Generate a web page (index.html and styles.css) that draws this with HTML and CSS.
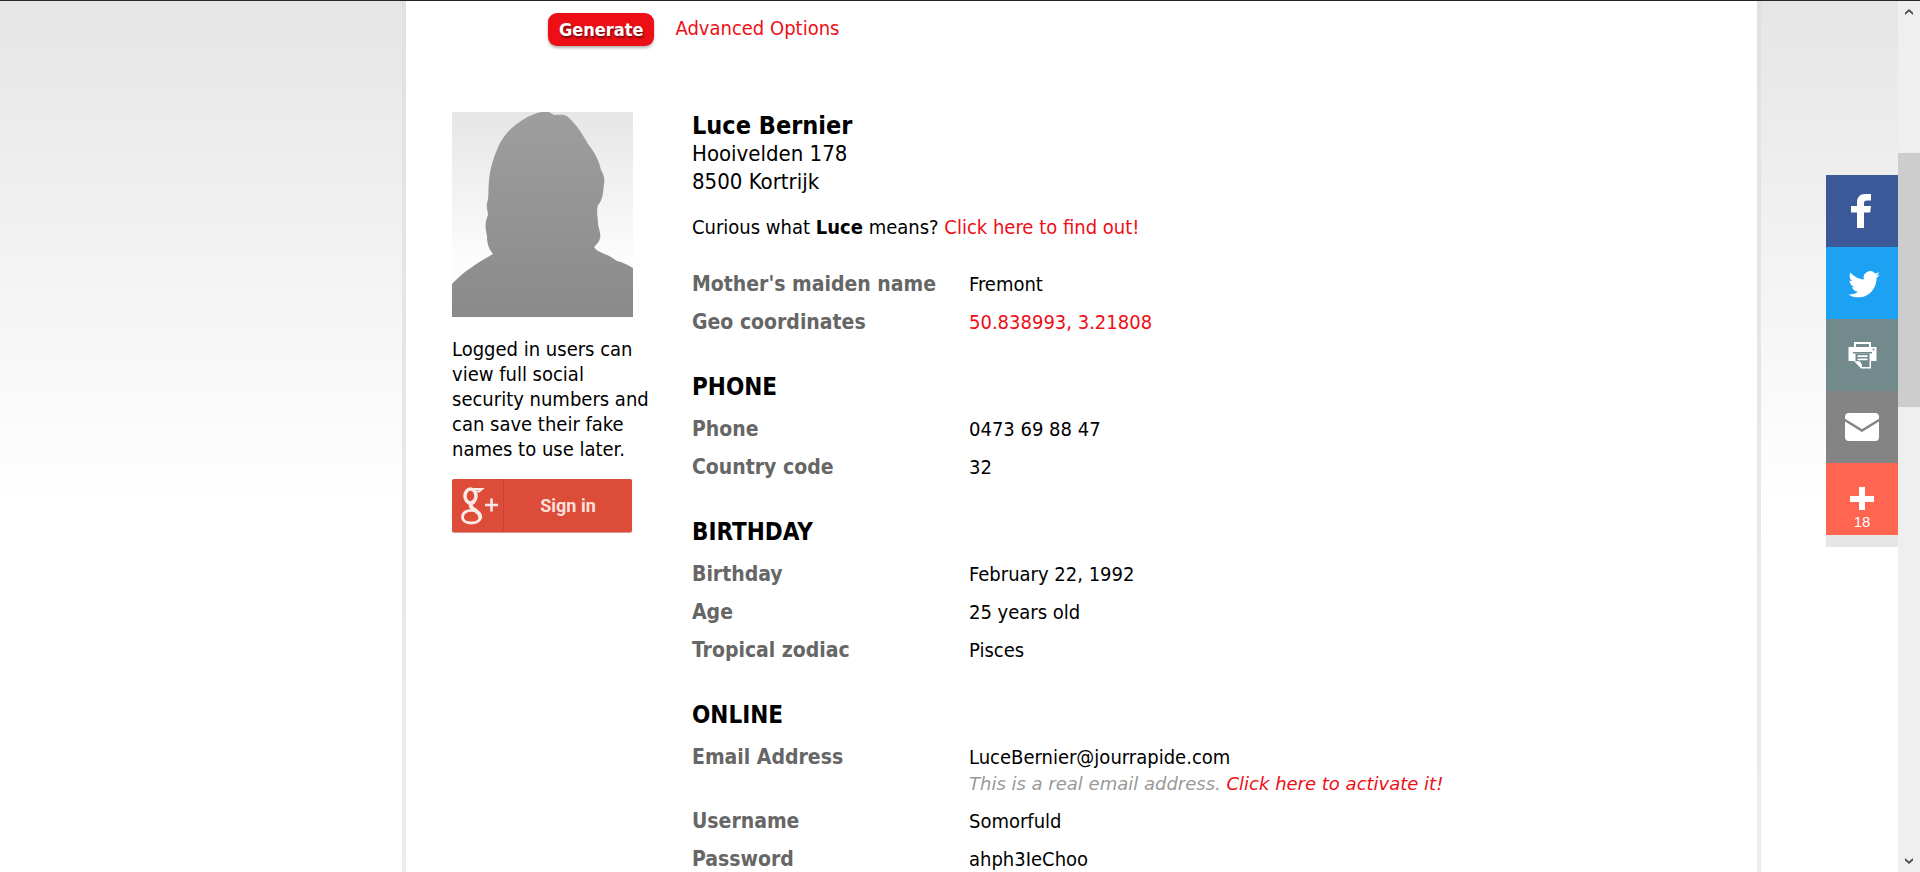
FILE: index.html
```html
<!DOCTYPE html>
<html lang="en">
<head>
<meta charset="utf-8">
<title>Luce Bernier</title>
<link rel="stylesheet" href="styles.css">
</head>
<body>
<div class="window">
  <div class="viewport">
    <main class="page">
      <div class="toolbar">
        <button class="generate" type="button">Generate</button>
        <a class="advanced" href="#">Advanced Options</a>
      </div>
      <div class="content">
        <aside class="side">
          <svg class="avatar" viewBox="0 0 181 205" role="img" aria-label="Silhouette of a woman">
            <defs>
              <linearGradient id="sky" x1="0" y1="0" x2="0" y2="1"><stop offset="0" stop-color="#e6e6e6"/><stop offset=".75" stop-color="#fdfdfd"/></linearGradient>
              <linearGradient id="body" x1="0" y1="0" x2="0" y2="1"><stop offset="0" stop-color="#9e9e9e"/><stop offset="1" stop-color="#8a8a8a"/></linearGradient>
            </defs>
            <rect width="181" height="205" fill="url(#sky)"/>
            <path fill="url(#body)" d="M0 172C11 160 25 151 41 142C36 136 35 130 35 124C33 115 33 110 36 103C36 99 34 96 35 91C37 87 36 77 37 69C38 56 42 44 47 33C53 21 61 14 72 7C80 2 89 -1 97 0L102 3C108 3 112 2 116 5C124 12 130 21 136 32C143 41 147 48 149 58C152 63 153 67 152 72C151 80 151 88 146 93C144 99 146 105 146 112C147 118 150 123 147 129C146 131 144 133 142 135C145 140 152 141 159 145L165 149C170 150 176 153 181 156V205H0Z"/>
          </svg>
          <p class="notice">Logged in users can view full social security numbers and can save their fake names to use later.</p>
          <button class="signin" type="button">
            <svg class="signin-logo" viewBox="0 0 51 53" fill="none" stroke="#fbe9e6" aria-hidden="true">
              <ellipse cx="18.500" cy="17" rx="5.500" ry="7" stroke-width="3.500"/>
              <path d="M18 10h12l-3 2.500h-5" stroke-width="2"/>
              <path d="M22 22.500c-5 3-4 5 0 8c4 3 7 5 6 9" stroke-width="4"/>
              <path d="M22 31.500c-7-1-11.500 2-11.500 6.500c0 4 4 6 9 6c6 0 9.500-3 8.500-7" stroke-width="2.800"/>
              <path d="M33 26h13M39.500 19.500v13" stroke-width="2.600"/>
            </svg>
            <span class="signin-label">Sign in</span>
          </button>
        </aside>
        <div class="details">
          <div class="address">
            <h1 class="name">Luce Bernier</h1>
            <div>Hooivelden 178</div>
            <div>8500 Kortrijk</div>
          </div>
          <p class="curious">Curious what <b>Luce</b> means? <a href="#">Click here to find out!</a></p>
          <dl class="facts">
            <dt>Mother's maiden name</dt><dd>Fremont</dd>
            <dt>Geo coordinates</dt><dd><a href="#">50.838993, 3.21808</a></dd>
          </dl>
          <h2 class="section">PHONE</h2>
          <dl class="facts">
            <dt>Phone</dt><dd>0473 69 88 47</dd>
            <dt>Country code</dt><dd>32</dd>
          </dl>
          <h2 class="section">BIRTHDAY</h2>
          <dl class="facts">
            <dt>Birthday</dt><dd>February 22, 1992</dd>
            <dt>Age</dt><dd>25 years old</dd>
            <dt>Tropical zodiac</dt><dd>Pisces</dd>
          </dl>
          <h2 class="section">ONLINE</h2>
          <dl class="facts">
            <dt>Email Address</dt><dd>LuceBernier@jourrapide.com<div class="hint">This is a real email address. <a href="#">Click here to activate it!</a></div></dd>
            <dt>Username</dt><dd>Somorfuld</dd>
            <dt>Password</dt><dd>ahph3IeChoo</dd>
          </dl>
        </div>
      </div>
    </main>
    <nav class="share" aria-label="Share">
      <a class="share-item facebook" href="#" aria-label="Facebook"><svg viewBox="0 0 72 72" fill="#fff"><path d="M31 53V37.500h-6V31h6v-3.500C31 22 34 19 39 19h6v6.500h-4c-2 0-3 .8-3 2.500v3h7l-.8 6.500H38V53z"/></svg></a>
      <a class="share-item twitter" href="#" aria-label="Twitter"><svg viewBox="0 0 72 72" fill="#fff"><path d="M54 27.500c-1.200.5-2.400.9-3.700 1c1.300-.8 2.300-2 2.800-3.500c-1.200.7-2.600 1.200-4 1.500a6.500 6.500 0 0 0-11.200 6c-5.400-.3-10.200-2.900-13.400-6.900c-1.700 3-.9 6.800 2 8.700c-1 0-2-.3-2.900-.8c0 3.200 2.200 5.900 5.200 6.500c-1 .3-2 .3-2.900.1c.8 2.600 3.200 4.500 6 4.600c-2.700 2.100-6.200 3.100-9.600 2.700C25.200 49.300 28.700 50.300 32 50.300c12 0 18.800-10.200 18.500-19.400c1.300-.9 2.500-2.100 3.500-3.400z"/></svg></a>
      <a class="share-item print" href="#" aria-label="Print"><svg viewBox="0 0 72 72"><path fill="#fff" d="M28 23h17v5h-2v-3H30v3h-2zM22.500 28h28v14h-5.500v7.500H35L28 42h-5.500z"/><path fill="#738a8d" d="M27 33h19v1.500H27z"/><path fill="#738a8d" d="M29.500 34.500h14V48H36v-2l-2-3.500h-4.500z"/><path fill="#fff" d="M31.500 36.200h10V38h-10zM31.500 39.500h10v1.800h-10zM29.500 42.500h4l2.500 4v2h-1z"/><circle cx="47.500" cy="30.500" r="1" fill="#738a8d"/></svg></a>
      <a class="share-item email" href="#" aria-label="Email"><svg viewBox="0 0 72 72"><rect x="19" y="22" width="34" height="28" rx="4" fill="#fff"/><path d="M18 28.500l18 11l18-11" fill="none" stroke="#848484" stroke-width="2.500"/></svg></a>
      <a class="share-item more" href="#" aria-label="More, 18 shares"><svg viewBox="0 0 72 72" fill="#fff"><path d="M33 24h6v9h9v6h-9v8h-6v-8h-9v-6h9z"/></svg><span class="count">18</span></a>
    </nav>
  </div>
  <div class="scrollbar" aria-hidden="true">
    <svg class="arrow" viewBox="0 0 8 6"><path d="M0 6V3.500L4 0l4 3.500V6L4 2.500z"/></svg>
    <div class="track"><div class="thumb"></div></div>
    <svg class="arrow" viewBox="0 0 8 6"><path d="M0 0v2.500L4 6l4-3.500V0L4 3.500z"/></svg>
  </div>
</div>
</body>
</html>
```
FILE: styles.css
```css
* { box-sizing: border-box; }

body {
  margin: 0;
  color: #000;
  background: #fff;
  font: 20px/28px "DejaVu Sans Condensed", "DejaVu Sans", sans-serif;
}

a { color: #ee0e16; text-decoration: none; }
h1, h2, p, dl, dd { margin: 0; }

.window {
  display: flex;
  height: 100vh;
  overflow: hidden;
  border-top: 1px solid #272327;
}

.viewport {
  position: relative;
  flex: 1;
  display: grid;
  grid-template-columns: 402fr minmax(0, 1359fr) 137fr;
  background: linear-gradient(#e6e6e6, #e8e8e8 50px, #fff 500px);
}

.page {
  grid-column: 2;
  padding: 12px 46px 0;
  background: linear-gradient(#fff, #fff) padding-box, linear-gradient(#e1e1e1, #ededed) border-box;
  border: solid transparent;
  border-width: 0 4px;
}

.toolbar {
  display: flex;
  align-items: flex-start;
  gap: 21px;
  padding-left: 96px;
  line-height: 30px;
}

.generate {
  padding: 0 11px;
  border: 0;
  border-radius: 9px;
  background: #ee0e16;
  color: #fff;
  box-shadow: 0 2px 3px rgba(0, 0, 0, .3);
  text-shadow: 1px 2px 2px rgba(0, 0, 0, .5);
  font: bold 18px/33px "DejaVu Sans Condensed", "DejaVu Sans", sans-serif;
}

.content {
  display: grid;
  grid-template-columns: 202px minmax(0, 1fr);
  gap: 38px;
  margin-top: 66px;
}

.avatar { display: block; width: 181px; }
.notice { margin: 20px 0 17px; line-height: 25px; }

.signin {
  display: flex;
  align-items: center;
  width: 180px;
  height: 53px;
  padding: 0;
  border: 0;
  border-radius: 2px;
  background: #dd4b39;
  box-shadow: 0 1px 1px rgba(160, 40, 20, .5);
  color: #fbe0dc;
  font: bold 18px/24px Roboto, sans-serif;
}

.signin-logo { width: 52px; height: 53px; border-right: 1px solid #c94433; }
.signin-label { flex: 1; text-align: center; }

.address { font-size: 22px; }
.name { font-size: 25px; line-height: 28px; }
.curious { margin: 17px 0 24px; }

.facts { display: grid; grid-template-columns: 277px minmax(0, 1fr); align-items: baseline; }
.facts dt { padding: 5px 0; color: #666; font-size: 21px; font-weight: bold; }
.facts dd { padding: 5px 0; }
.section { margin-top: 25px; padding-bottom: 2px; font-size: 24px; line-height: 42px; }
.hint { color: #999; font: italic 18px/26px "DejaVu Sans", sans-serif; }

.share {
  position: absolute;
  top: 174px;
  right: 0;
  width: 72px;
  padding-bottom: 12px;
  background: #e6e6e6;
}

.share-item { position: relative; display: block; height: 72px; }
.share-item svg { display: block; width: 72px; height: 72px; }
.facebook { background: #3b5998; }
.twitter { background: #1da1f2; }
.print { background: #738a8d; }
.email { background: #848484; }
.more { background: #ff6550; }
.count {
  position: absolute;
  inset: auto 0 4px;
  color: #fff;
  text-align: center;
  font: 15px/18px "Liberation Sans", Arial, sans-serif;
}

.scrollbar {
  display: flex;
  flex-direction: column;
  align-items: center;
  width: 22px;
  padding: 8px 0;
  background: #efefef;
}

.arrow { width: 8px; height: 6px; fill: #505050; }
.track { flex: 1; align-self: stretch; padding-top: 138px; }
.thumb { height: 36%; background: #cdcdcd; }
```
